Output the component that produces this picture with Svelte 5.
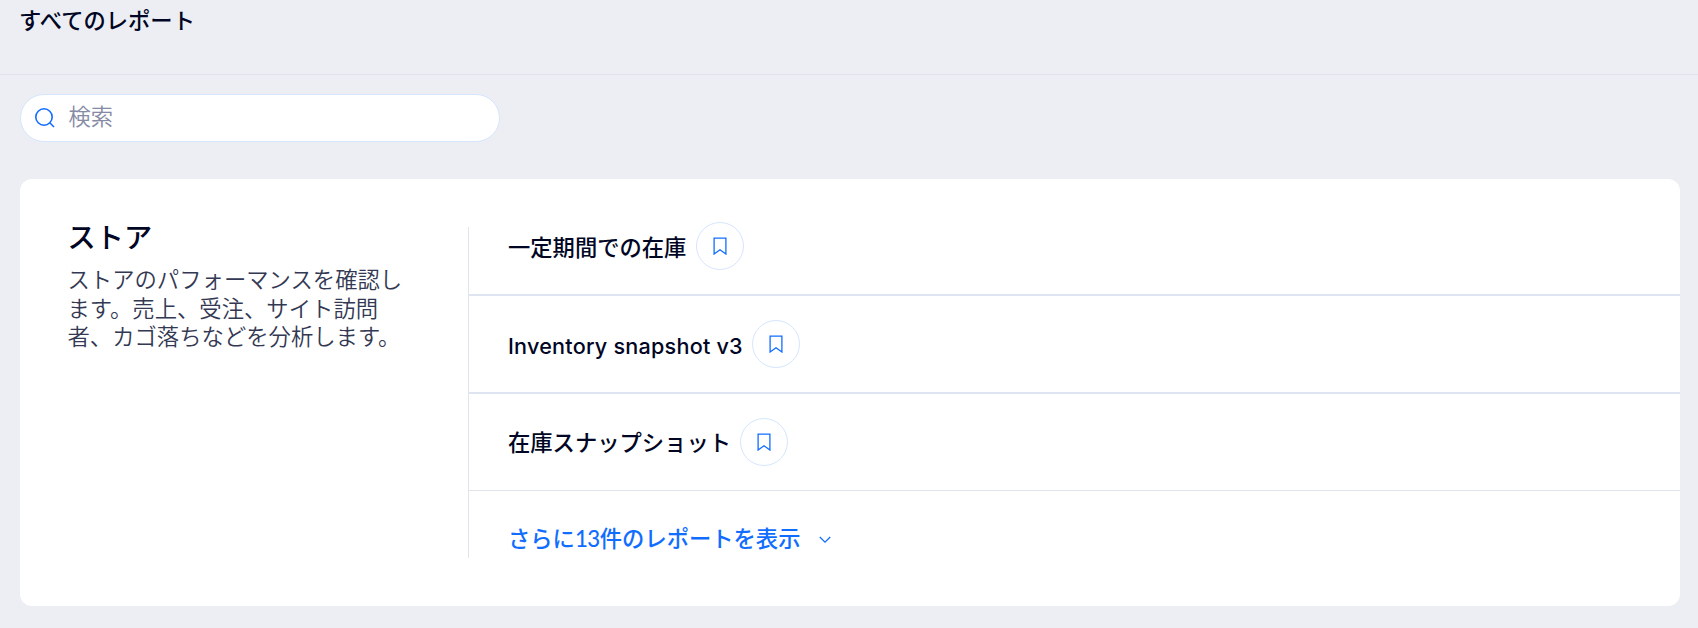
<script lang="ts">
  interface Report {
    name: string;
    latin?: boolean;
    saved: boolean;
  }

  let query = $state('');

  let reports: Report[] = $state([
    { name: '一定期間での在庫', saved: false },
    { name: 'Inventory snapshot v3', latin: true, saved: false },
    { name: '在庫スナップショット', saved: false }
  ]);

  function toggleSaved(report: Report) {
    report.saved = !report.saved;
  }
</script>

<div class="page">
  <header class="page-header">
    <h1>すべてのレポート</h1>
  </header>

  <main class="content">
    <label class="search">
      <svg class="search-icon" width="20" height="20" viewBox="0 0 20 20" fill="none">
        <circle cx="9" cy="9" r="8.2" />
        <path d="M14.8 14.8L19 19" />
      </svg>
      <input type="text" placeholder="検索" bind:value={query} />
    </label>

    <section class="card">
      <div class="summary">
        <h2>ストア</h2>
        <p>ストアのパフォーマンスを確認します。売上、受注、サイト訪問者、カゴ落ちなどを分析します。</p>
      </div>

      <div class="reports">
        {#each reports as report}
          <div class="report-row">
            <span class="report-name" class:latin={report.latin}>{report.name}</span>
            <button
              class="bookmark"
              class:saved={report.saved}
              aria-label="ブックマーク"
              onclick={() => toggleSaved(report)}
            >
              <svg width="14" height="18" viewBox="0 0 14 18">
                <path d="M1.1 1.1H12.9V17L7 12.8L1.1 17Z" />
              </svg>
            </button>
          </div>
        {/each}
        <button class="show-more">
          <span class="show-more-label">さらに<span class="count">13</span>件のレポートを表示</span>
          <svg width="12" height="8" viewBox="0 0 12 8">
            <path d="M0.8 1L6 6.2L11.2 1" />
          </svg>
        </button>
      </div>
    </section>
  </main>
</div>

<style>
  :global(body) {
    margin: 0;
    background: #eceef3;
  }

  .page {
    height: 628px;
    overflow: hidden;
    color: #000624;
    font-family: 'Noto Sans CJK JP', sans-serif;
  }

  .page-header {
    box-sizing: border-box;
    height: 75px;
    padding: 3px 19px 0;
    border-bottom: 1px solid #dfe3eb;
  }

  h1 {
    margin: 0;
    font-size: 22.3px;
    line-height: 32px;
    font-weight: 500;
  }

  .content {
    padding: 19px 18px 0 20px;
  }

  .search {
    display: flex;
    align-items: center;
    gap: 14px;
    box-sizing: border-box;
    width: 480px;
    height: 48px;
    padding: 0 13.5px;
    background: #fff;
    border: 1px solid #d6e6fe;
    border-radius: 24px;
  }

  .search-icon {
    flex: none;
    stroke: #116dff;
    stroke-width: 1.6;
  }

  .search input {
    flex: 1;
    min-width: 0;
    padding: 0 0 6px;
    border: none;
    outline: none;
    background: transparent;
    color: #000624;
    font-family: inherit;
    font-size: 22.3px;
    font-weight: 350;
  }

  .search input::placeholder {
    color: #868aa5;
    opacity: 1;
  }

  .card {
    display: flex;
    align-items: flex-start;
    box-sizing: border-box;
    height: 427px;
    margin-top: 37px;
    padding-top: 48px;
    background: #fff;
    border-radius: 12px;
  }

  .summary {
    box-sizing: border-box;
    width: 448px;
    padding: 0 60px 0 47.5px;
    margin-top: -13px;
  }

  h2 {
    margin: 0;
    font-size: 28.2px;
    line-height: 44px;
    font-weight: 500;
  }

  .summary p {
    margin: 6px 0 0;
    color: #333853;
    font-size: 22.35px;
    line-height: 28.6px;
    font-weight: 350;
  }

  .reports {
    flex: 1;
    height: 331px;
    border-left: 1px solid #dfe5eb;
  }

  .report-row {
    display: flex;
    align-items: center;
    box-sizing: border-box;
    height: 98px;
    padding-left: 39px;
    border-bottom: 2px solid #dfe5f0;
  }

  .report-row:first-child {
    height: 69px;
    padding-bottom: 29px;
  }

  .report-row:first-child .bookmark {
    margin-left: 10px;
  }

  .report-row:nth-child(3) {
    height: 97px;
    border-bottom: 1px solid #dfe5eb;
  }

  .report-name {
    padding-bottom: 1px;
    font-size: 22.3px;
    line-height: 32px;
    font-weight: 500;
  }

  .report-row:nth-child(3) .report-name {
    padding-bottom: 3px;
  }

  .report-name.latin {
    padding: 3px 0 0;
    font-family: Inter, sans-serif;
    font-size: 21.6px;
    font-weight: 450;
    letter-spacing: 0.22px;
  }

  .bookmark {
    display: flex;
    align-items: center;
    justify-content: center;
    flex: none;
    width: 48px;
    height: 48px;
    margin-left: 9px;
    padding: 0;
    background: #fff;
    border: 1px solid #d6e6fe;
    border-radius: 50%;
    cursor: pointer;
  }

  .bookmark path {
    fill: none;
    stroke: #116dff;
    stroke-width: 1.3;
  }

  .bookmark.saved path {
    fill: #116dff;
  }

  .show-more {
    display: flex;
    align-items: center;
    gap: 19px;
    height: 98px;
    padding: 0 0 0 39px;
    background: none;
    border: none;
    color: #116dff;
    font-family: inherit;
    font-size: 22.3px;
    font-weight: 500;
    cursor: pointer;
  }

  .show-more-label {
    padding-bottom: 7px;
  }

  .count {
    font-family: Lato, sans-serif;
    letter-spacing: -0.5px;
  }

  .show-more path {
    fill: none;
    stroke: #116dff;
    stroke-width: 1.3;
  }
</style>
